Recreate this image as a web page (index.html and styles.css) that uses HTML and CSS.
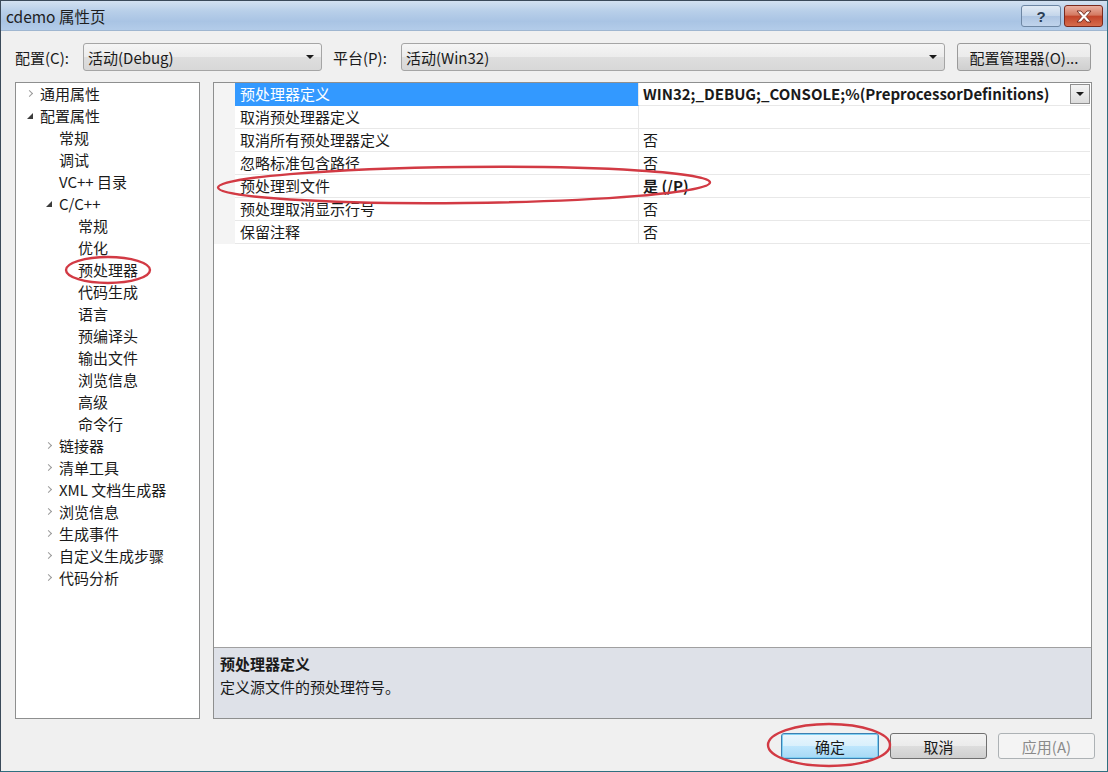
FILE: index.html
```html
<!DOCTYPE html>
<html lang="zh-CN">
<head>
<meta charset="utf-8">
<title>cdemo 属性页</title>
<link rel="stylesheet" href="styles.css">
</head>
<body>
<div class="window">
  <div class="titlebar">
    <span class="title">cdemo 属性页</span>
    <div class="caption-btns">
      <div class="cap help">?</div>
      <div class="cap close">
        <svg width="18" height="13" viewBox="0 0 18 13"><path d="M2 1 L6 1 L9 4.5 L12 1 L16 1 L11.2 6.5 L16 12 L12 12 L9 8.5 L6 12 L2 12 L6.8 6.5 Z" fill="#fff" stroke="#6b2418" stroke-width="0.9" stroke-linejoin="round"/></svg>
      </div>
    </div>
  </div>
  <div class="body">
    <div class="toprow">
      <span class="lbl lbl-config">配置(C):</span>
      <div class="combo combo-config"><span>活动(Debug)</span><i class="arrow"></i></div>
      <span class="lbl lbl-platform">平台(P):</span>
      <div class="combo combo-platform"><span>活动(Win32)</span><i class="arrow"></i></div>
      <div class="btn btn-manager">配置管理器(O)...</div>
    </div>
    <div class="main">
      <div class="tree">
        <div class="node l0"><span class="caret"><i class="chev"></i></span>通用属性</div>
        <div class="node l0"><span class="caret"><i class="tri"></i></span>配置属性</div>
        <div class="node l1"><span class="caret"></span>常规</div>
        <div class="node l1"><span class="caret"></span>调试</div>
        <div class="node l1"><span class="caret"></span>VC++ 目录</div>
        <div class="node l1"><span class="caret"><i class="tri"></i></span>C/C++</div>
        <div class="node l2"><span class="caret"></span>常规</div>
        <div class="node l2"><span class="caret"></span>优化</div>
        <div class="node l2"><span class="caret"></span>预处理器</div>
        <div class="node l2"><span class="caret"></span>代码生成</div>
        <div class="node l2"><span class="caret"></span>语言</div>
        <div class="node l2"><span class="caret"></span>预编译头</div>
        <div class="node l2"><span class="caret"></span>输出文件</div>
        <div class="node l2"><span class="caret"></span>浏览信息</div>
        <div class="node l2"><span class="caret"></span>高级</div>
        <div class="node l2"><span class="caret"></span>命令行</div>
        <div class="node l1"><span class="caret"><i class="chev"></i></span>链接器</div>
        <div class="node l1"><span class="caret"><i class="chev"></i></span>清单工具</div>
        <div class="node l1"><span class="caret"><i class="chev"></i></span>XML 文档生成器</div>
        <div class="node l1"><span class="caret"><i class="chev"></i></span>浏览信息</div>
        <div class="node l1"><span class="caret"><i class="chev"></i></span>生成事件</div>
        <div class="node l1"><span class="caret"><i class="chev"></i></span>自定义生成步骤</div>
        <div class="node l1"><span class="caret"><i class="chev"></i></span>代码分析</div>
      </div>
      <div class="right">
        <div class="grid">
          <div class="row selected">
            <div class="gut"></div>
            <div class="name">预处理器定义</div>
            <div class="value bold">WIN32;_DEBUG;_CONSOLE;%(PreprocessorDefinitions)<span class="dd"><i class="arrow"></i></span></div>
          </div>
          <div class="row"><div class="gut"></div><div class="name">取消预处理器定义</div><div class="value"></div></div>
          <div class="row"><div class="gut"></div><div class="name">取消所有预处理器定义</div><div class="value">否</div></div>
          <div class="row"><div class="gut"></div><div class="name">忽略标准包含路径</div><div class="value">否</div></div>
          <div class="row"><div class="gut"></div><div class="name">预处理到文件</div><div class="value bold">是 (/P)</div></div>
          <div class="row"><div class="gut"></div><div class="name">预处理取消显示行号</div><div class="value">否</div></div>
          <div class="row"><div class="gut"></div><div class="name">保留注释</div><div class="value">否</div></div>
        </div>
        <div class="desc">
          <div class="desc-title">预处理器定义</div>
          <div class="desc-text">定义源文件的预处理符号。</div>
        </div>
      </div>
    </div>
    <div class="buttons">
      <div class="btn btn-ok">确定</div>
      <div class="btn btn-cancel">取消</div>
      <div class="btn btn-apply">应用(A)</div>
    </div>
  </div>
  <svg class="annot" width="1108" height="772" viewBox="0 0 1108 772">
    <ellipse cx="108" cy="270" rx="42" ry="13" fill="none" stroke="#d23a44" stroke-width="2.4"/>
    <ellipse cx="464" cy="185" rx="246" ry="18" fill="none" stroke="#d23a44" stroke-width="2.4" transform="rotate(-0.6 464 185)"/>
    <ellipse cx="829" cy="745" rx="61" ry="21" fill="none" stroke="#d23a44" stroke-width="2.4"/>
  </svg>
</div>
</body>
</html>
```

FILE: styles.css
```css
* { box-sizing: border-box; }
html, body { margin: 0; padding: 0; }
body {
  width: 1108px;
  height: 772px;
  overflow: hidden;
  font-family: "Noto Sans CJK SC", "Microsoft YaHei", sans-serif;
  font-size: 15px;
  color: #1a1a1a;
  background: #6f8aa6;
}
.window {
  position: relative;
  width: 1108px;
  height: 772px;
  border: 1px solid #3b4a5a;
  border-bottom-color: #2f6f80;
  border-right-color: #2f6f80;
  background: #f0f0f0;
  display: flex;
  flex-direction: column;
}
.titlebar {
  height: 30px;
  flex: none;
  display: flex;
  align-items: flex-start;
  justify-content: space-between;
  background: linear-gradient(#d3e1f1 0%, #b8cfe9 35%, #a9c4e4 70%, #b3cce9 100%);
  border-bottom: 1px solid #9fb6d0;
}
.title {
  padding-left: 5px;
  line-height: 30px;
  font-size: 15.5px;
  color: #1e1e1e;
}
.caption-btns {
  display: flex;
  gap: 3px;
  padding-top: 4px;
  padding-right: 4px;
}
.cap {
  height: 22px;
  border: 1px solid #6e87a4;
  border-radius: 3px;
  display: flex;
  align-items: center;
  justify-content: center;
}
.help {
  width: 40px;
  background: linear-gradient(#e2ebf5 0%, #c3d5ea 50%, #aec5e2 51%, #c0d4ec 100%);
  color: #2b3e55;
  font-family: "Liberation Sans", sans-serif;
  font-size: 15px;
  font-weight: bold;
}
.close {
  width: 39px;
  border-color: #7a2a1e;
  background: linear-gradient(#eab0a2 0%, #d47a62 45%, #c2452b 52%, #d66c4d 100%);
}
.body {
  flex: 1;
  display: flex;
  flex-direction: column;
  padding: 12px 15px 11px 14px;
}
.toprow {
  height: 28px;
  display: flex;
  align-items: center;
}
.lbl { font-size: 15px; white-space: nowrap; }
.lbl-config { width: 68px; }
.lbl-platform { width: 68px; margin-left: 11px; }
.combo {
  height: 28px;
  border: 1px solid #a5a5a5;
  border-radius: 3px;
  background: linear-gradient(#f5f5f5 0%, #ececec 50%, #dedede 51%, #d8d8d8 100%);
  display: flex;
  align-items: center;
  justify-content: space-between;
  padding: 0 7px 0 4px;
}
.combo-config { width: 239px; }
.combo-platform { width: 544px; }
.arrow {
  display: block;
  width: 0;
  height: 0;
  border-left: 4px solid transparent;
  border-right: 4px solid transparent;
  border-top: 4px solid #1a1a1a;
}
.btn {
  height: 26px;
  border: 1px solid #707070;
  border-radius: 3px;
  background: linear-gradient(#f2f2f2 0%, #ebebeb 50%, #dddddd 51%, #cfcfcf 100%);
  display: flex;
  align-items: center;
  justify-content: center;
  font-size: 15px;
}
.btn-manager {
  width: 134px;
  height: 28px;
  margin-left: 12px;
  border-color: #9a9a9a;
}
.main {
  margin-top: 11px;
  height: 637px;
  display: flex;
  gap: 13px;
}
.tree {
  width: 185px;
  border: 1px solid #8e8f8f;
  background: #fff;
}
.node {
  height: 22px;
  line-height: 22px;
  display: flex;
  align-items: center;
  white-space: nowrap;
}
.l0 { padding-left: 8px; }
.l1 { padding-left: 27px; }
.l2 { padding-left: 46px; }
.caret {
  width: 16px;
  height: 22px;
  flex: none;
  position: relative;
}
.chev {
  position: absolute;
  left: 3px;
  top: 8px;
  width: 5px;
  height: 5px;
  border-top: 1px solid #9a9a9a;
  border-right: 1px solid #9a9a9a;
  transform: rotate(45deg);
}
.tri {
  position: absolute;
  left: 3px;
  top: 8px;
  width: 0;
  height: 0;
  border-left: 6px solid transparent;
  border-bottom: 6px solid #3c3c3c;
}
.right {
  flex: 1;
  display: flex;
  flex-direction: column;
  border: 1px solid #8e8f8f;
}
.grid {
  flex: 1;
  background: #fff;
  border-bottom: 1px solid #a0a0a0;
}
.row {
  width: 876px;
  height: 23px;
  display: flex;
}
.gut {
  width: 21px;
  flex: none;
  background: #f4f4f4;
}
.name {
  width: 404px;
  line-height: 22px;
  padding-left: 5px;
  border-right: 1px solid #e8e8e8;
  border-bottom: 1px solid #e8e8e8;
  white-space: nowrap;
}
.value {
  flex: 1;
  line-height: 22px;
  padding-left: 4px;
  white-space: nowrap;
  position: relative;
  border-bottom: 1px solid #e8e8e8;
}
.bold { font-weight: bold; }
.selected .name {
  background: #3399ff;
  color: #fff;
  border-bottom-color: #3399ff;
}
.dd {
  position: absolute;
  right: 0;
  top: 1px;
  width: 20px;
  height: 20px;
  border: 1px solid #8f8f8f;
  background: linear-gradient(#f4f4f4, #dcdcdc);
  display: flex;
  align-items: center;
  justify-content: center;
}
.desc {
  height: 70px;
  background: #dee1e8;
  padding: 4px 6px 0;
}
.desc-title {
  font-weight: bold;
  line-height: 23px;
}
.desc-text {
  line-height: 23px;
}
.buttons {
  margin-top: 14px;
  display: flex;
  justify-content: flex-end;
  gap: 11px;
  margin-right: -3px;
}
.btn-ok {
  width: 98px;
  border-color: #3c7fb1;
  background: linear-gradient(#eaf6fd 0%, #d9f0fc 50%, #bee6fd 51%, #a7d9f5 100%);
  box-shadow: inset 0 0 0 1px #7fd0f3;
}
.btn-cancel { width: 97px; }
.btn-apply {
  width: 97px;
  border-color: #adb2b5;
  background: #f4f4f4;
  color: #8a8a8a;
}
.annot {
  position: absolute;
  left: -1px;
  top: -1px;
  pointer-events: none;
}
```
